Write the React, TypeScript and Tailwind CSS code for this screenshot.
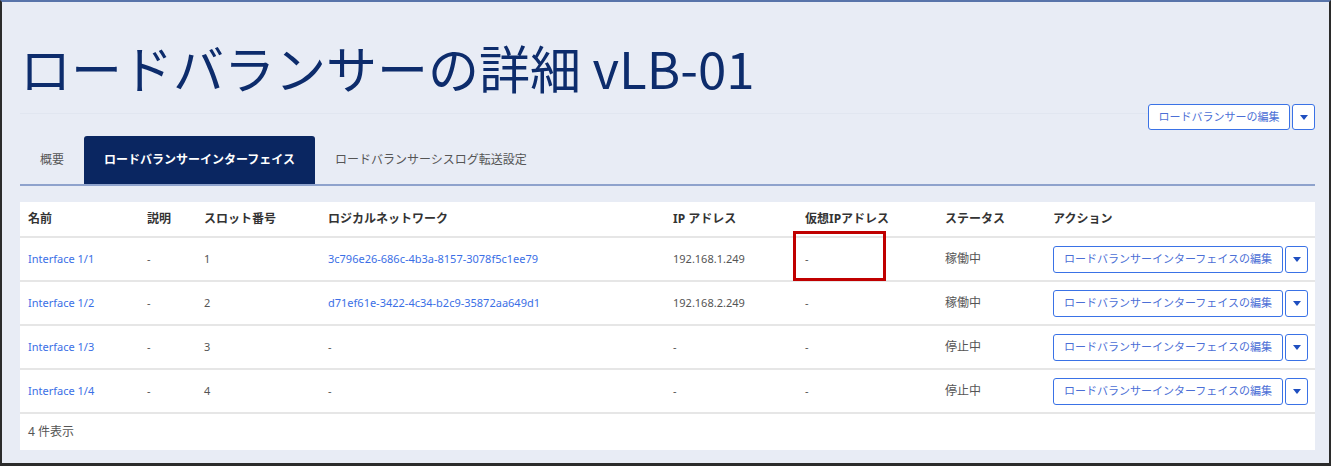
import React from 'react';

const rows = [
  { name: 'Interface 1/1', desc: '-', slot: '1', net: '3c796e26-686c-4b3a-8157-3078f5c1ee79', ip: '192.168.1.249', vip: '-', status: '稼働中' },
  { name: 'Interface 1/2', desc: '-', slot: '2', net: 'd71ef61e-3422-4c34-b2c9-35872aa649d1', ip: '192.168.2.249', vip: '-', status: '稼働中' },
  { name: 'Interface 1/3', desc: '-', slot: '3', net: '-', ip: '-', vip: '-', status: '停止中' },
  { name: 'Interface 1/4', desc: '-', slot: '4', net: '-', ip: '-', vip: '-', status: '停止中' },
];

const cols = 'grid grid-cols-[119px_57px_124px_345px_132px_140px_108px_1fr] items-center';

function Caret() {
  return (
    <svg width="8" height="5" viewBox="0 0 8 5" className="fill-[#1f4fc0]">
      <path d="M0 0h8L4 5z" />
    </svg>
  );
}

function SplitButton({ label, w }: { label: string; w: string }) {
  return (
    <div className="flex h-[27px] items-stretch gap-[2px]">
      <button className={`${w} h-full rounded-[3px] border-[1.5px] border-[#3a72e6] bg-white text-[11px] text-[#4c6fd6]`}>
        {label}
      </button>
      <button className="flex h-full w-[23px] items-center justify-center rounded-[3px] border-[1.5px] border-[#3a72e6] bg-white">
        <Caret />
      </button>
    </div>
  );
}

export default function App() {
  return (
    <div className="h-[466px] w-[1333px] overflow-hidden bg-white font-['Noto_Sans','Noto_Sans_CJK_JP',sans-serif]">
      <div className="relative flex h-[466px] w-[1331px] flex-col border-x-2 border-b-[3px] border-t-2 border-x-[#2b2b2b] border-b-[#2b2b2b] border-t-[#5874aa] bg-[#e8ecf5] pl-[18px] pr-[14px]">
        {/* Title */}
        <h1 className="mt-[35px] h-[60px] font-['Noto_Sans_CJK_JP',sans-serif] text-[51px] leading-[60px] text-[#0d2c6c]">
          ロードバランサーの詳細 vLB-01
        </h1>

        {/* Header actions */}
        <div className="mt-[7px] flex h-[26px] items-start">
          <div className="mt-[9px] flex-1 border-t border-[#e1e6f0]" />
          <div className="flex h-[26px] items-stretch gap-[2px]">
            <button className="h-full w-[142px] rounded-[3px] border-[1.5px] border-[#3a72e6] bg-white text-[11px] text-[#4c6fd6]">
              ロードバランサーの編集
            </button>
            <button className="flex h-full w-[23px] items-center justify-center rounded-[3px] border-[1.5px] border-[#3a72e6] bg-white">
              <Caret />
            </button>
          </div>
        </div>

        {/* Tabs */}
        <div className="mt-[6px] flex h-[50px] items-stretch border-b-2 border-[#8ea2cc]">
          <div className="flex items-center px-5 text-[12px] text-[#555]">概要</div>
          <div className="flex items-center rounded-t-[3px] bg-[#0a2661] px-5 text-[12px] font-bold text-white">
            ロードバランサーインターフェイス
          </div>
          <div className="flex items-center px-5 text-[12px] text-[#555]">ロードバランサーシスログ転送設定</div>
        </div>

        {/* Table */}
        <div className="mt-4 bg-white text-[11px] text-[#555]">
          <div className={`${cols} h-[36px] border-b-2 border-[#e6e6e6] text-[12px] font-bold text-[#333]`}>
            <div className="px-2">名前</div>
            <div className="px-2">説明</div>
            <div className="px-2">スロット番号</div>
            <div className="px-2">ロジカルネットワーク</div>
            <div className="px-2">IP アドレス</div>
            <div className="px-2">仮想IPアドレス</div>
            <div className="px-2">ステータス</div>
            <div className="px-2">アクション</div>
          </div>
          {rows.map((r) => (
            <div key={r.name} className={`${cols} h-[44px] border-b-2 border-[#e6e6e6]`}>
              <div className="px-2 text-[#3b6fe6]">{r.name}</div>
              <div className="px-2">{r.desc}</div>
              <div className="px-2">{r.slot}</div>
              <div className={`px-2 ${r.net === '-' ? '' : 'text-[#3b6fe6]'}`}>{r.net}</div>
              <div className="px-2">{r.ip}</div>
              <div className="px-2">{r.vip}</div>
              <div className="px-2 text-[12px]">{r.status}</div>
              <div className="px-2">
                <SplitButton label="ロードバランサーインターフェイスの編集" w="w-[230px]" />
              </div>
            </div>
          ))}
          <div className="flex h-[36px] items-center px-2 text-[12px]">4 件表示</div>
        </div>

        {/* Annotation box */}
        <div className="absolute left-[791px] top-[229px] h-[50px] w-[93px] border-[3px] border-[#c00000]" />
      </div>
    </div>
  );
}
